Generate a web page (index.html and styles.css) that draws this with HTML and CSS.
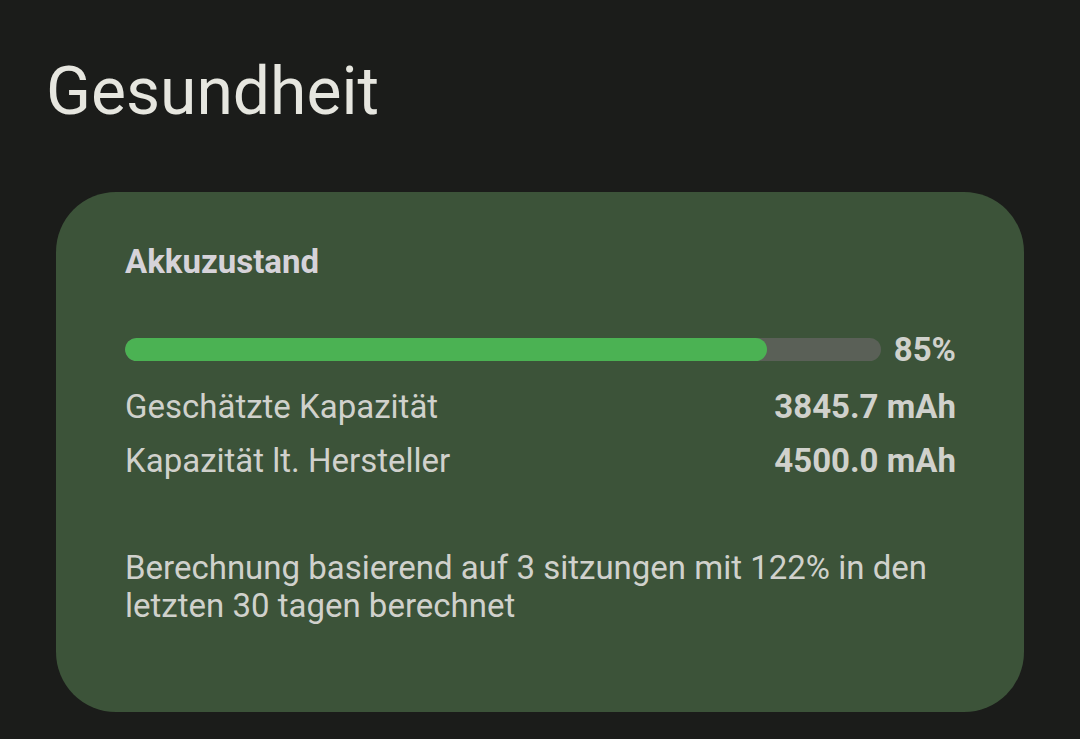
FILE: index.html
```html
<!DOCTYPE html>
<html lang="de">
<head>
  <meta charset="UTF-8">
  <title>Gesundheit</title>
  <link rel="stylesheet" href="styles.css">
</head>
<body>

  <h1 class="title">Gesundheit</h1>

  <div class="card">
    <h2 class="card-title">Akkuzustand</h2>

    <div class="health">
      <div class="bar">
        <div class="bar-fill" style="width: 85%"></div>
      </div>
      <span class="percent">85%</span>
    </div>

    <div class="row">
      <span>Geschätzte Kapazität</span>
      <span class="value">3845.7 mAh</span>
    </div>
    <div class="row">
      <span>Kapazität lt. Hersteller</span>
      <span class="value">4500.0 mAh</span>
    </div>

    <p class="note">Berechnung basierend auf 3 sitzungen mit 122% in den letzten 30 tagen berechnet</p>
  </div>

</body>
</html>
```

FILE: styles.css
```css
body {
  margin: 0;
  font-family: Roboto, "Noto Sans", sans-serif;
  background-color: #1b1c1a;
  color: #d0d1cc;
}

.title {
  margin: 0;
  padding: 52px 0 0 46px;
  font-size: 66px;
  font-weight: 400;
  line-height: 80px;
  color: #e6e6df;
}

.card {
  box-sizing: border-box;
  width: 968px;
  height: 520px;
  margin: 60px 0 0 56px;
  padding: 52px 68px 0 69px;
  background-color: #3c5339;
  border-radius: 60px;
}

.card-title {
  margin: 0;
  font-size: 33px;
  font-weight: 700;
  line-height: 36px;
  color: #d6d3d9;
}

.health {
  display: flex;
  align-items: center;
  gap: 13px;
  margin-top: 58px;
}

.bar {
  flex: 1;
  height: 23px;
  background-color: #5a6057;
  border-radius: 12px;
  overflow: hidden;
}

.bar-fill {
  height: 100%;
  background-color: #4bb253;
  border-radius: 12px;
}

.percent {
  font-size: 33px;
  font-weight: 700;
  line-height: 23px;
}

.row {
  display: flex;
  justify-content: space-between;
  font-size: 33px;
  line-height: 54px;
}

.health + .row {
  margin-top: 19px;
}

.value {
  font-weight: 700;
}

.note {
  margin: 61px 0 0;
  font-size: 33px;
  line-height: 38px;
}
```
